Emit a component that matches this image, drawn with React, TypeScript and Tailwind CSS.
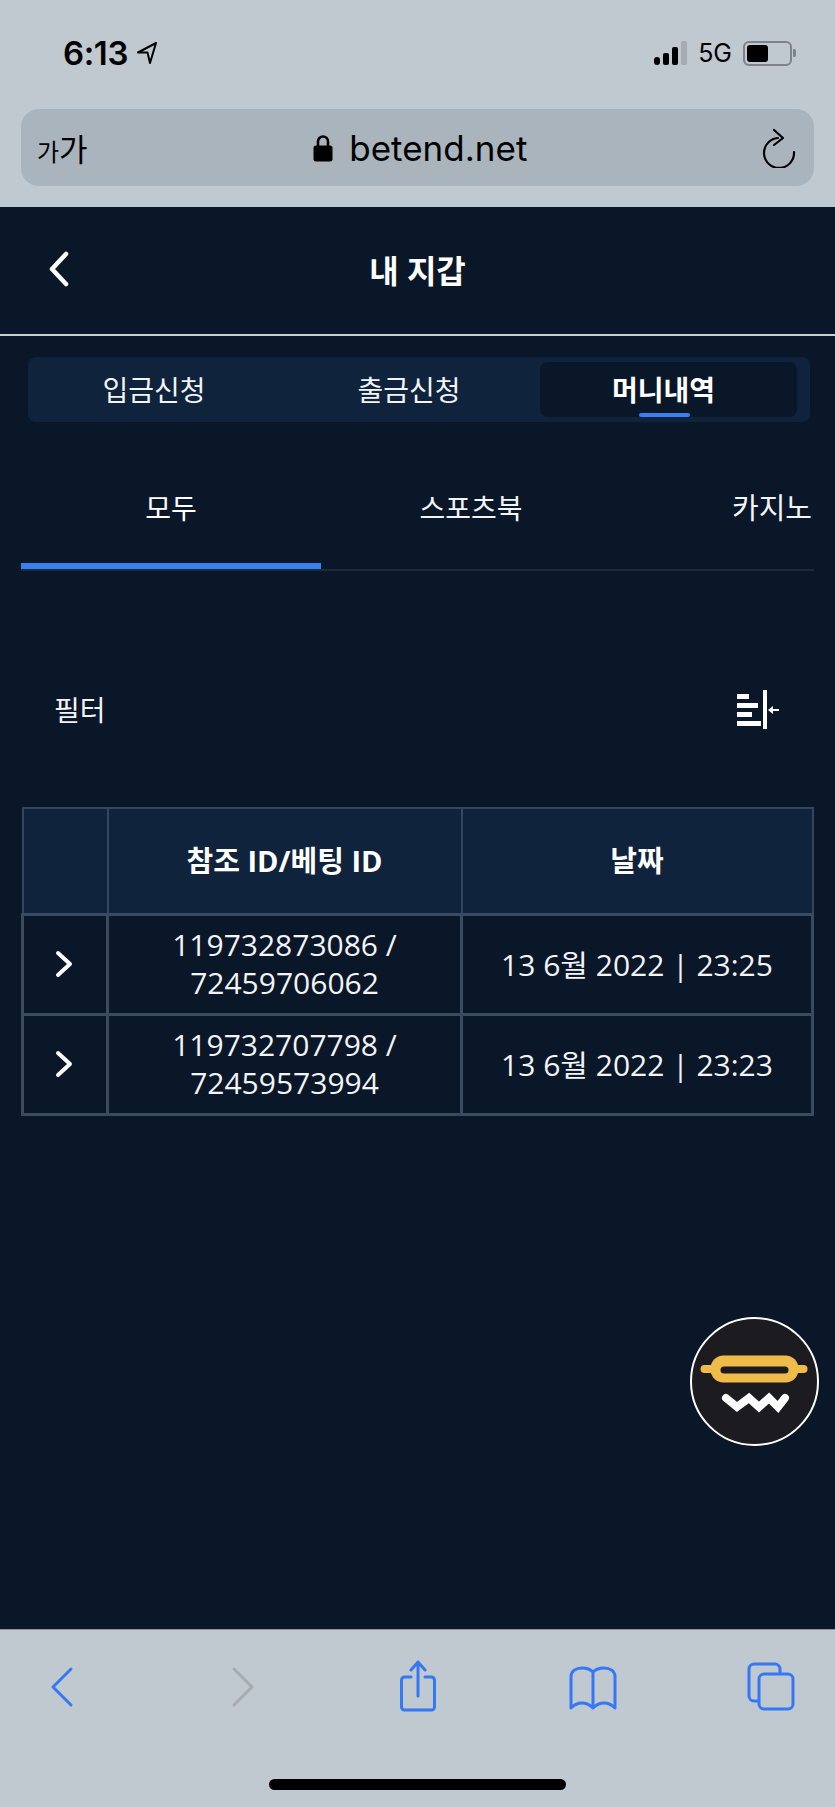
const KR = "font-['Open_Sans','Noto_Sans_CJK_KR',sans-serif]";

const rows = [
  { id1: "119732873086 /", id2: "72459706062", date: "13 6월 2022 | 23:25" },
  { id1: "119732707798 /", id2: "72459573994", date: "13 6월 2022 | 23:23" },
];

function StatusBar() {
  return (
    <div className="flex h-[109px] items-start justify-between pl-[63px] pr-[39px] pt-[36px] font-['Inter','Liberation_Sans',sans-serif] text-black">
      <div className="flex items-center gap-[8px]">
        <span className="text-[33px] leading-[34px] font-semibold tracking-[-0.4px]">6:13</span>
        {/* 위치 화살표 */}
        <svg width="22" height="24" viewBox="0 0 22 24" fill="none" stroke="#000" strokeWidth="2" strokeLinejoin="round">
          <path d="M20 2 2 11.500h9.500L14 22 20 2Z" />
        </svg>
      </div>
      <div className="flex items-center gap-[11px] pt-[4px]">
        <div className="flex items-end gap-[3px]">
          <span className="h-[8px] w-[6px] rounded-[3px] bg-black" />
          <span className="h-[12px] w-[6px] rounded-[2px] bg-black" />
          <span className="h-[18px] w-[6px] rounded-[2px] bg-black" />
          <span className="h-[24px] w-[6px] rounded-[2px] bg-[#a4abb3]" />
        </div>
        <span className="text-[25px] leading-[26px]">5G</span>
        <div className="flex items-center gap-[1px]">
          <div className="flex h-[25px] w-[49px] items-center rounded-[6px] border-2 border-[#7d8389] p-[2px]">
            <span className="h-full w-[21px] rounded-[3px] bg-black" />
          </div>
          <span className="h-[8px] w-[3px] rounded-r-[2px] bg-[#7d8389]" />
        </div>
      </div>
    </div>
  );
}

function AddressBar() {
  return (
    <div className="mx-[21px] flex h-[77px] items-center justify-between rounded-[18px] bg-[#aab4bd] pl-[16px] pr-[18px] text-black">
      <span className="flex items-end font-['Noto_Sans_CJK_KR',sans-serif]">
        <span className="text-[24px] leading-none">가</span>
        <span className="text-[31px] leading-none">가</span>
      </span>
      <div className="flex items-center gap-[16px] pr-[9px]">
        <svg width="20" height="28" viewBox="0 0 20 28" fill="none">
          <path d="M5 13V7.500a5 5 0 0 1 10 0V13" stroke="#000" strokeWidth="2.6" />
          <rect x="0.5" y="11.5" width="19" height="16" rx="2.5" fill="#000" />
        </svg>
        <span className="font-['Inter','Liberation_Sans',sans-serif] text-[35px] leading-[40px]">betend.net</span>
      </div>
      <svg width="34" height="40" viewBox="0 0 34 40" fill="none" stroke="#000" strokeWidth="2.2" strokeLinecap="round" strokeLinejoin="round">
        <path d="M16 10A15 15 0 1 0 32 24" />
        <path d="M12 2l9 8-9 7" />
      </svg>
    </div>
  );
}

function TopTabs() {
  return (
    <div className="ml-[28px] mr-[25px] mt-[20px] grid h-[65px] grid-cols-[258px_254px_1fr] items-center rounded-[8px] bg-[#0f233c] pr-[13px] text-[28px] text-[#f2f4f6]">
      <span className="pr-[6px] text-center">입금신청</span>
      <span className="pr-[8px] text-center">출금신청</span>
      <div className="relative flex h-[55px] items-center justify-center rounded-[8px] bg-[#0a1729] pr-[10px] font-bold text-white">
        머니내역
        <span className="absolute bottom-0 left-[99px] h-[4px] w-[51px] rounded-[2px] bg-[#3880f0]" />
      </div>
    </div>
  );
}

function SubTabs() {
  return (
    <div className="mx-[21px] mt-[30px] flex h-[119px] border-b-2 border-[#1c2a3c] text-[28px] text-[#f2f4f6]">
      <div className="flex h-[117px] w-[300px] items-center justify-center border-b-[6px] border-[#3880f0] text-white">모두</div>
      <div className="flex w-[300px] items-center justify-center pb-[6px]">스포츠북</div>
      <div className="flex flex-1 items-center justify-end pb-[6px] pr-[2px] text-[29px] whitespace-nowrap">카지노</div>
    </div>
  );
}

function FilterRow() {
  return (
    <div className="mt-[108px] flex h-[62px] items-center justify-between pl-[54px] pr-[55px] text-[28px] text-[#f2f4f6]">
      <span>필터</span>
      <svg width="43" height="40" viewBox="0 0 43 40" fill="#fff">
        <rect x="0" y="4" width="12" height="5" />
        <rect x="0" y="13" width="21" height="5" />
        <rect x="0" y="22" width="15" height="5" />
        <rect x="0" y="31" width="24" height="5" />
        <rect x="26" y="0" width="4" height="39" />
        <path d="M31 20l5-4v3h6v2h-6v3z" />
      </svg>
    </div>
  );
}

function Chevron({ dir }: { dir: "left" | "right" }) {
  return (
    <svg width="22" height="36" viewBox="0 0 22 36" fill="none" stroke="#fff" strokeWidth="4.5" strokeLinecap="round" strokeLinejoin="round">
      <path d={dir === "left" ? "M18 3 4 18l14 15" : "M4 3l14 15L4 33"} />
    </svg>
  );
}

function MoneyTable() {
  return (
    <table className="mx-[21px] mt-[66px] w-[793px] table-fixed border-collapse text-[30px] text-[#f2f4f6]">
      <thead>
        <tr className="h-[106px] bg-[#0f233c] font-bold text-white">
          <th className="w-[85px] border-2 border-[#34455c]" />
          <th className="w-[354px] border-2 border-[#34455c] text-[29px] font-bold">참조 ID/베팅 ID</th>
          <th className="border-2 border-[#34455c] text-[29px] font-bold">날짜</th>
        </tr>
      </thead>
      <tbody>
        {rows.map((row) => (
          <tr key={row.id1} className="h-[100px]">
            <td className="border-[3px] border-[#3a4a5f]">
              <div className="flex justify-center pr-[3px]">
                <svg width="18" height="28" viewBox="0 0 18 28" fill="none" stroke="#fff" strokeWidth="4" strokeLinecap="round" strokeLinejoin="round">
                  <path d="M3 3l12 11L3 25" />
                </svg>
              </div>
            </td>
            <td className="border-[3px] border-[#3a4a5f] text-center leading-[38px]">
              {row.id1}
              <br />
              {row.id2}
            </td>
            <td className="border-[3px] border-[#3a4a5f] text-center">{row.date}</td>
          </tr>
        ))}
      </tbody>
    </table>
  );
}

function SafariBar() {
  return (
    <div className="flex h-[178px] flex-col border-t border-[#8b949c] bg-[#c0c8d0]">
      <div className="flex h-[100px] items-center pl-[41px] pt-[11px]">
        <svg className="h-[52px] w-[40px]" viewBox="0 0 40 52" fill="none" stroke="#3478f6" strokeWidth="3" strokeLinecap="round" strokeLinejoin="round">
          <path d="M30 9 12 27l18 18" />
        </svg>
        <svg className="ml-[142px] h-[52px] w-[40px]" viewBox="0 0 40 52" fill="none" stroke="#a6abb0" strokeWidth="3" strokeLinecap="round" strokeLinejoin="round">
          <path d="M11 9l18 18-18 18" />
        </svg>
        <svg className="ml-[135px] h-[52px] w-[40px]" viewBox="0 0 40 52" fill="none" stroke="#3478f6" strokeWidth="3" strokeLinecap="round" strokeLinejoin="round">
          <path d="M13 17H6.500a3 3 0 0 0-3 3v27a3 3 0 0 0 3 3h27a3 3 0 0 0 3-3V20a3 3 0 0 0-3-3H27" />
          <path d="M20 36V2M13 10l7-8 7 8" />
        </svg>
        <svg className="ml-[129px] h-[52px] w-[52px]" viewBox="0 0 52 52" fill="none" stroke="#3478f6" strokeWidth="3" strokeLinecap="round" strokeLinejoin="round">
          <path d="M26 12c-3-3-6-4-11-4-6 0-11 3-11 9v31c3-3 7-5 11-5 5 0 8 2 11 5 3-3 6-5 11-5 4 0 8 2 11 5V17c0-6-5-9-11-9-5 0-8 1-11 4Zm0 0v36" />
        </svg>
        <svg className="ml-[127px] h-[52px] w-[50px]" viewBox="0 0 50 52" fill="none" stroke="#3478f6" strokeWidth="3" strokeLinejoin="round">
          <path d="M12 41H8a5 5 0 0 1-5-5V9a5 5 0 0 1 5-5h21a5 5 0 0 1 5 5v5" />
          <rect x="13" y="14" width="34" height="35" rx="5" />
        </svg>
      </div>
      <div className="mt-[49px] flex justify-center">
        <span className="h-[11px] w-[297px] rounded-full bg-black" />
      </div>
    </div>
  );
}

export default function App() {
  return (
    <div className={`relative flex h-[1807px] w-full flex-col overflow-hidden bg-[#0a1729] ${KR}`}>
      {/* 브라우저 상단 */}
      <div className="h-[207px] bg-[#c0c8d0]">
        <StatusBar />
        <AddressBar />
      </div>

      <main className="flex-1">
        <div className="relative flex h-[129px] items-center justify-center border-b-2 border-[#c9cbcd]">
          <span className="absolute left-[48px] top-[44px]">
            <Chevron dir="left" />
          </span>
          <h1 className="text-[32px] font-bold text-white">내 지갑</h1>
        </div>
        <div className="h-px" />
        <TopTabs />
        <SubTabs />
        <FilterRow />
        <MoneyTable />
      </main>

      <SafariBar />

      {/* 떠있는 버튼 */}
      <div className="absolute left-[690px] top-[1317px] flex h-[129px] w-[129px] items-center justify-center rounded-full border-2 border-white bg-[#1c1c20]">
        <svg width="112" height="72" viewBox="0 0 112 72" fill="none">
          <rect x="1.5" y="19" width="107" height="8" rx="4" fill="#efbc4a" />
          <rect x="11.5" y="9.5" width="88" height="27" rx="13" fill="#efbc4a" />
          <rect x="21.5" y="20.5" width="68" height="7" rx="3.5" fill="#1c1c20" />
          <path d="M27 52l11 9 12-9 10 9 10-9 9 9 7-9" stroke="#fff" strokeWidth="8" strokeLinecap="round" strokeLinejoin="miter" />
        </svg>
      </div>
    </div>
  );
}
